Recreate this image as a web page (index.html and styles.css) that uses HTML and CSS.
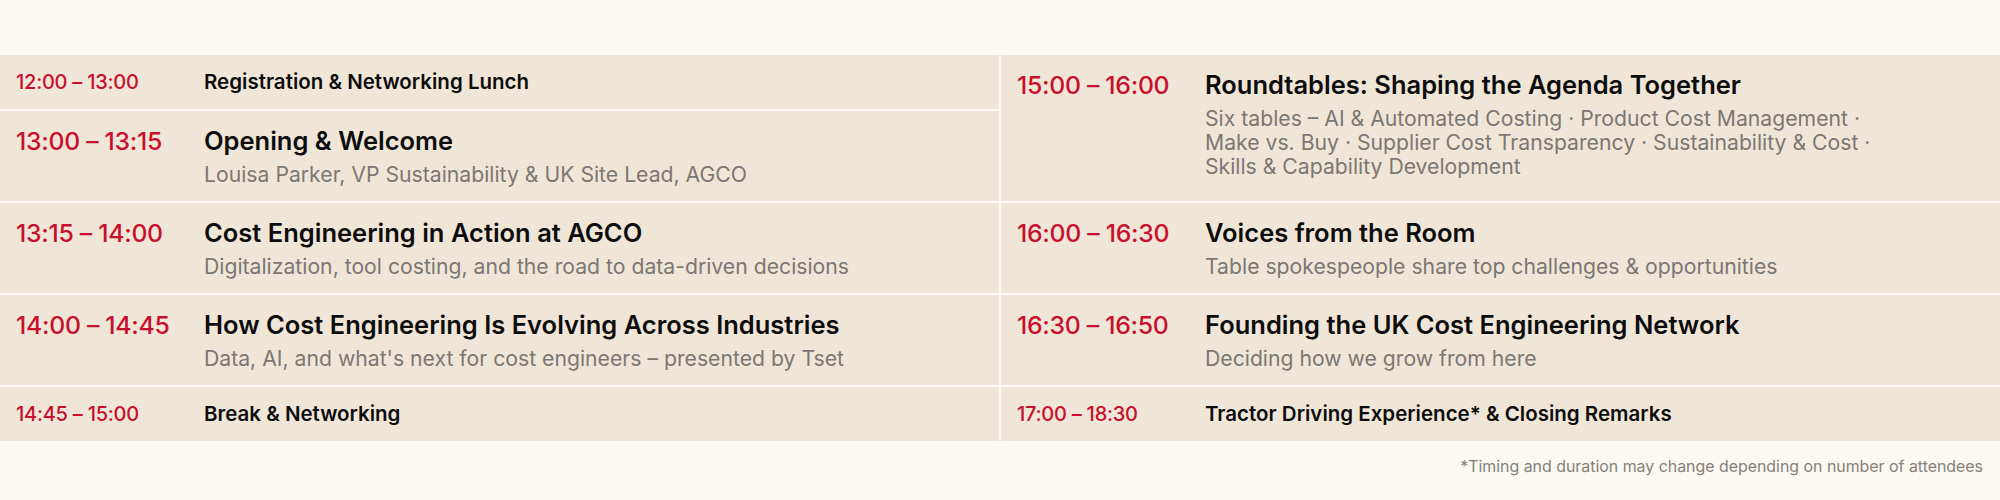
FILE: index.html
```html
<!DOCTYPE html>
<html lang="en">
<head>
<meta charset="utf-8">
<title>Agenda</title>
<link rel="stylesheet" href="styles.css">
</head>
<body>
<main class="agenda">
  <div class="schedule">
    <div class="slot small">
      <div class="inner"><span class="time">12:00 – 13:00</span><div class="body"><div class="title">Registration &amp; Networking Lunch</div></div></div>
    </div>
    <div class="slot">
      <div class="inner"><span class="time">13:00 – 13:15</span><div class="body"><div class="title">Opening &amp; Welcome</div><div class="desc">Louisa Parker, VP Sustainability &amp; UK Site Lead, AGCO</div></div></div>
    </div>
    <div class="slot">
      <div class="inner"><span class="time">13:15 – 14:00</span><div class="body"><div class="title">Cost Engineering in Action at AGCO</div><div class="desc">Digitalization, tool costing, and the road to data-driven decisions</div></div></div>
    </div>
    <div class="slot">
      <div class="inner"><span class="time">14:00 – 14:45</span><div class="body"><div class="title">How Cost Engineering Is Evolving Across Industries</div><div class="desc">Data, AI, and what's next for cost engineers – presented by Tset</div></div></div>
    </div>
    <div class="slot small">
      <div class="inner"><span class="time">14:45 – 15:00</span><div class="body"><div class="title">Break &amp; Networking</div></div></div>
    </div>
    <div class="slot tall">
      <div class="inner"><span class="time">15:00 – 16:00</span><div class="body"><div class="title">Roundtables: Shaping the Agenda Together</div><div class="desc">Six tables – AI &amp; Automated Costing · Product Cost Management ·<br>Make vs. Buy · Supplier Cost Transparency · Sustainability &amp; Cost ·<br>Skills &amp; Capability Development</div></div></div>
    </div>
    <div class="slot">
      <div class="inner"><span class="time">16:00 – 16:30</span><div class="body"><div class="title">Voices from the Room</div><div class="desc">Table spokespeople share top challenges &amp; opportunities</div></div></div>
    </div>
    <div class="slot">
      <div class="inner"><span class="time">16:30 – 16:50</span><div class="body"><div class="title">Founding the UK Cost Engineering Network</div><div class="desc">Deciding how we grow from here</div></div></div>
    </div>
    <div class="slot small">
      <div class="inner"><span class="time">17:00 – 18:30</span><div class="body"><div class="title">Tractor Driving Experience* &amp; Closing Remarks</div></div></div>
    </div>
  </div>
  <p class="note">*Timing and duration may change depending on number of attendees</p>
</main>
</body>
</html>
```
FILE: styles.css
```css
html, body {
  margin: 0;
  padding: 0;
  background: #fcf9f2;
}

body {
  font-family: Inter, "Noto Sans", sans-serif;
  color: #0d0d0d;
}

.agenda {
  padding-top: 55px;
}

.schedule {
  display: grid;
  grid-template-columns: 1fr 1fr;
  grid-template-rows: repeat(5, auto);
  grid-auto-flow: column;
  gap: 2px;
}

.slot {
  background: #f0e6d8;
  padding: 15px 16px;
}

.slot.tall {
  grid-row: span 2;
}

.inner {
  display: flex;
  align-items: baseline;
}

.time {
  flex: 0 0 188px;
  color: #c8102e;
  font-weight: 500;
  font-size: 24.8px;
  line-height: 30px;
  letter-spacing: -0.3px;
}

.title {
  font-weight: 600;
  font-size: 25.5px;
  line-height: 30px;
}

.desc {
  margin-top: 6px;
  font-size: 21.2px;
  line-height: 24px;
  color: #7b7772;
}

.small .time {
  font-size: 20px;
  line-height: 24px;
  letter-spacing: -0.25px;
}

.small .title {
  font-size: 20.5px;
  line-height: 24px;
}

.note {
  margin: 16px 17px 0 0;
  text-align: right;
  font-size: 15.9px;
  line-height: 20px;
  color: #85817b;
}
```
